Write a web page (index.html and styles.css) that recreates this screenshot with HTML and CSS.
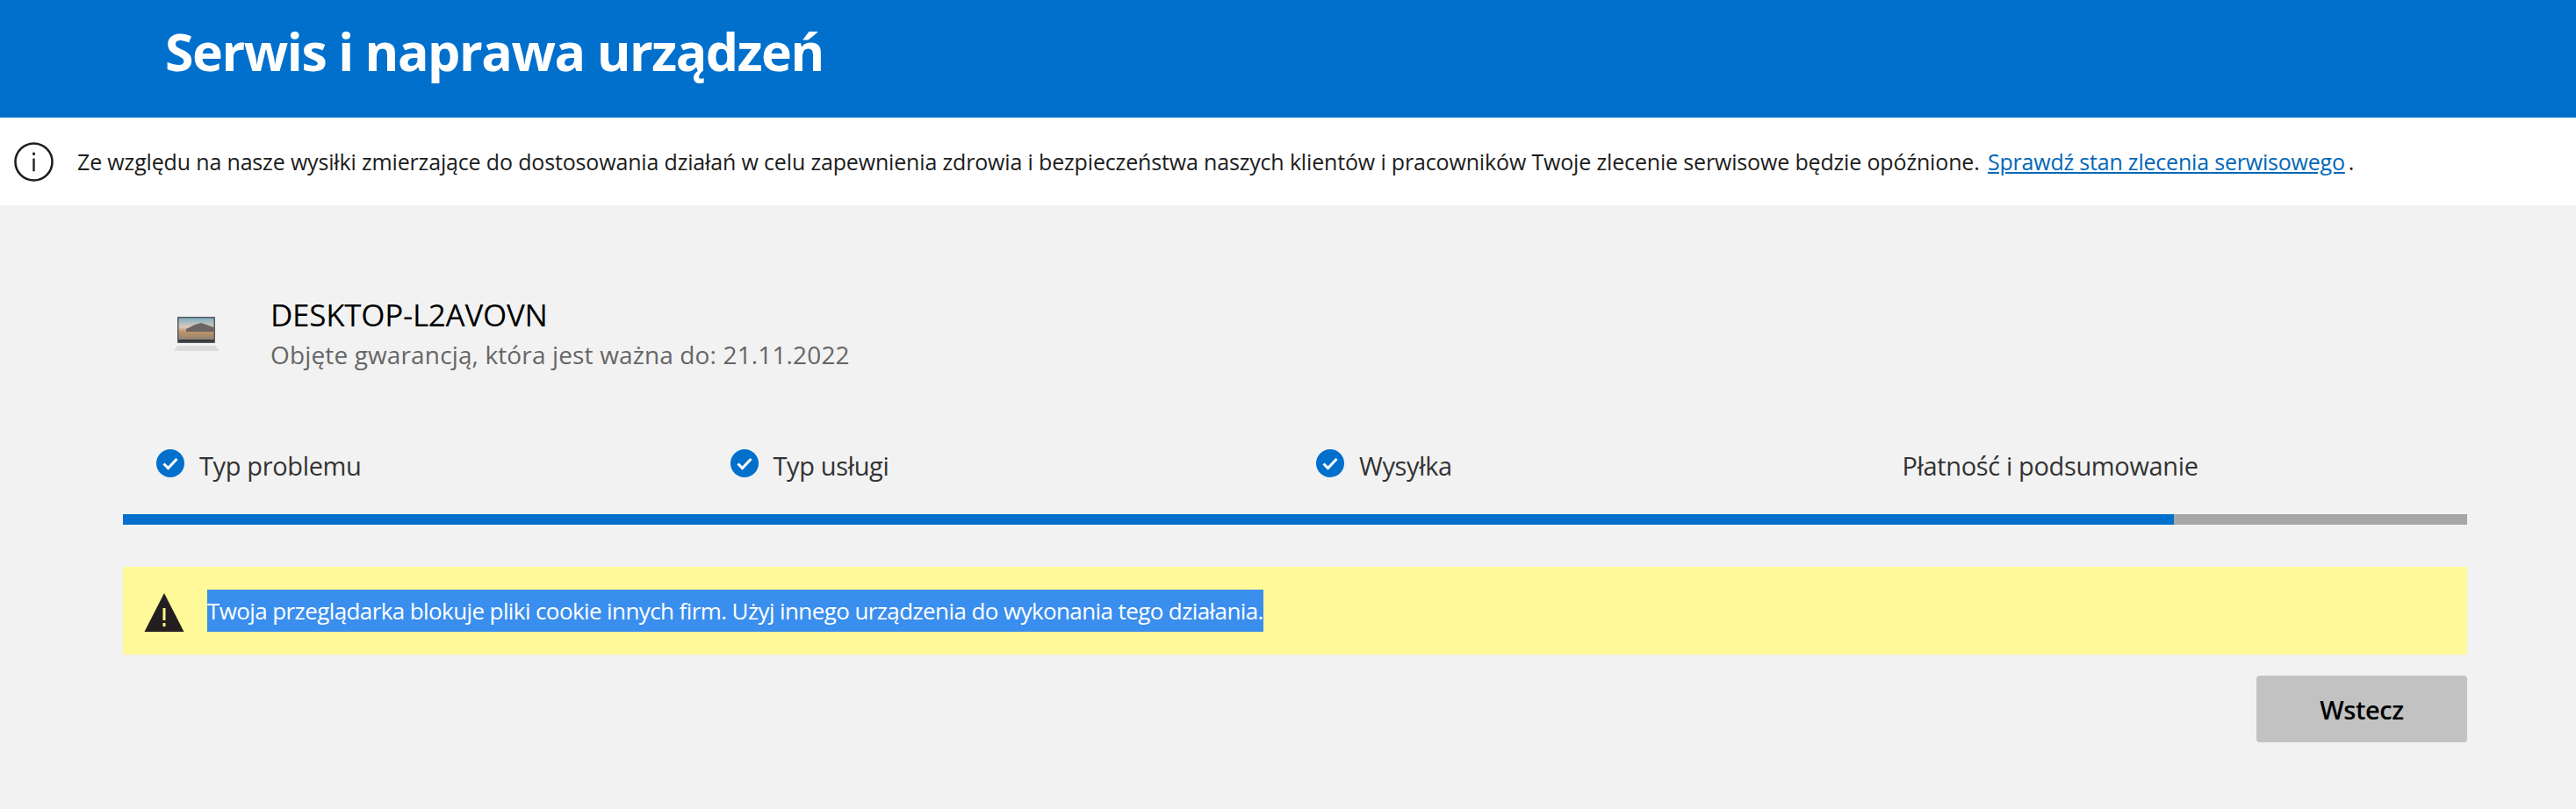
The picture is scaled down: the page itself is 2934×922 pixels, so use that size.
FILE: index.html
```html
<!DOCTYPE html>
<html lang="pl">
<head>
<meta charset="utf-8">
<title>Serwis i naprawa urządzeń</title>
<link rel="stylesheet" href="styles.css">
</head>
<body>
<header class="hero"><h1 class="hero-title">Serwis i naprawa urządzeń</h1></header>
<div class="notice">
  <svg class="notice-icon" width="45" height="45" viewBox="0 0 46 46"><circle cx="23" cy="23" r="21.5" fill="none" stroke="#201c1c" stroke-width="2.6"/><rect x="21.8" y="19" width="2.4" height="15" fill="#201c1c"/><rect x="21.6" y="12" width="2.8" height="3.2" fill="#201c1c"/></svg>
  <p class="notice-text">Ze względu na nasze wysiłki zmierzające do dostosowania działań w celu zapewnienia zdrowia i bezpieczeństwa naszych klientów i pracowników Twoje zlecenie serwisowe będzie opóźnione. <a class="notice-link" href="#">Sprawdź stan zlecenia serwisowego</a><span class="notice-end">.</span></p>
</div>
<main class="content">
  <section class="device">
    <svg class="device-img" width="52" height="40" viewBox="0 0 52 40">
      <defs><linearGradient id="sky" x1="0" y1="0" x2="0" y2="1"><stop offset="0" stop-color="#7fb0c6"/><stop offset=".4" stop-color="#dcc8bc"/><stop offset=".62" stop-color="#c09468"/><stop offset="1" stop-color="#8b8276"/></linearGradient></defs>
      <rect x="4" y="0" width="43" height="30" rx="1" fill="#55585c"/>
      <rect x="5.500" y="1.500" width="40" height="25" fill="url(#sky)"/>
      <path d="M14 14 L24 9 L31 7 L37 9 L45.500 12 V17 H14 Z" fill="#6a6562"/>
      <rect x="5.500" y="26" width="40" height="2.500" fill="#34373b"/>
      <path d="M4 33 H47 L52 39 H0 Z" fill="#dcdcdc"/>
    </svg>
    <div class="device-info">
      <div class="device-name">DESKTOP-L2AVOVN</div>
      <div class="device-warranty">Objęte gwarancją, która jest ważna do: 21.11.2022</div>
    </div>
  </section>
  <ol class="steps">
    <li class="step step-first"><svg class="check" width="32" height="32" viewBox="0 0 32 32"><circle cx="16" cy="16" r="16" fill="#0070cc"/><path d="M8.500 16.500 L13.500 21.500 L23.500 11" fill="none" stroke="#fff" stroke-width="3"/></svg><span>Typ problemu</span></li>
    <li class="step"><svg class="check" width="32" height="32" viewBox="0 0 32 32"><circle cx="16" cy="16" r="16" fill="#0070cc"/><path d="M8.500 16.500 L13.500 21.500 L23.500 11" fill="none" stroke="#fff" stroke-width="3"/></svg><span>Typ usługi</span></li>
    <li class="step"><svg class="check" width="32" height="32" viewBox="0 0 32 32"><circle cx="16" cy="16" r="16" fill="#0070cc"/><path d="M8.500 16.500 L13.500 21.500 L23.500 11" fill="none" stroke="#fff" stroke-width="3"/></svg><span>Wysyłka</span></li>
    <li class="step"><span>Płatność i podsumowanie</span></li>
  </ol>
  <div class="progress"><div class="progress-fill"></div></div>
  <div class="alert">
    <svg class="alert-icon" width="46" height="46" viewBox="0 0 46 46"><path d="M23 1 L45.500 45 H0.500 Z" fill="#231f20"/><rect x="21.500" y="18" width="3" height="14" fill="#fff685"/><rect x="21.500" y="35" width="3" height="4" fill="#fff685"/></svg>
    <span class="alert-text">Twoja przeglądarka blokuje pliki cookie innych firm. Użyj innego urządzenia do wykonania tego działania.</span>
  </div>
  <div class="actions"><button class="back" type="button">Wstecz</button></div>
</main>
</body>
</html>
```
FILE: styles.css
```css
* { box-sizing: border-box; }
html, body { margin: 0; padding: 0; }
body {
  background: #f2f2f2;
  font-family: "Open Sans", "Noto Sans", sans-serif;
  color: #201c1c;
  height: 922px;
  overflow: hidden;
}
.hero {
  background: #0070cc;
  height: 134px;
  padding: 24px 0 0 188px;
}
.hero-title {
  margin: 0;
  color: #fff;
  font-size: 59px;
  line-height: 68px;
  font-weight: 700;
  letter-spacing: -1.45px;
}
.notice {
  background: #fff;
  height: 100px;
  display: flex;
  align-items: center;
  padding: 0 0 0 16px;
  gap: 27px;
}
.notice-icon { flex: none; }
.notice-text {
  margin: 0;
  font-size: 25px;
  line-height: 32px;
  letter-spacing: -0.16px;
  white-space: nowrap;
}
.notice-link {
  color: #0067b8;
  text-decoration: underline;
  margin-left: 3px;
  letter-spacing: -0.2px;
}
.notice-end { margin-left: 4px; }
.content { padding: 0 124px 0 140px; }
.device {
  display: flex;
  align-items: center;
  height: 100px;
  margin-top: 97px;
  padding-left: 58px;
  gap: 58px;
}
.device-img { flex: none; }
.device-name {
  font-size: 35px;
  line-height: 46px;
  color: #000;
  letter-spacing: -0.3px;
}
.device-warranty {
  font-size: 28px;
  line-height: 44px;
  color: #666;
  letter-spacing: 0.14px;
}
.steps {
  list-style: none;
  margin: 77px 0 0;
  padding: 0;
  display: grid;
  grid-template-columns: repeat(4, 1fr);
  height: 78px;
  color: #333;
}
.step {
  display: flex;
  align-items: center;
  gap: 17px;
  padding-left: 24px;
  height: 44px;
  font-size: 29px;
  letter-spacing: -0.36px;
}
.step-first { padding-left: 38px; }
.check { flex: none; margin-top: -4px; }
.progress { height: 12px; background: #a6a6a6; }
.progress-fill { height: 100%; width: 87.5%; background: #0070cc; }
.alert {
  margin-top: 48px;
  height: 100px;
  background: #fff999;
  display: flex;
  align-items: center;
  padding-left: 24px;
  gap: 26px;
}
.alert-icon { flex: none; margin-top: 4px; }
.alert-text {
  background: #3a8eed;
  color: #fff;
  font-size: 26px;
  line-height: 48px;
  letter-spacing: -0.6px;
  white-space: nowrap;
}
.actions { display: flex; justify-content: flex-end; margin-top: 24px; }
.back {
  width: 240px;
  height: 76px;
  background: #c2c2c2;
  border: 0;
  border-radius: 4px;
  color: #000;
  font-family: inherit;
  font-size: 29px;
  font-weight: 600;
  letter-spacing: -0.4px;
}
```
